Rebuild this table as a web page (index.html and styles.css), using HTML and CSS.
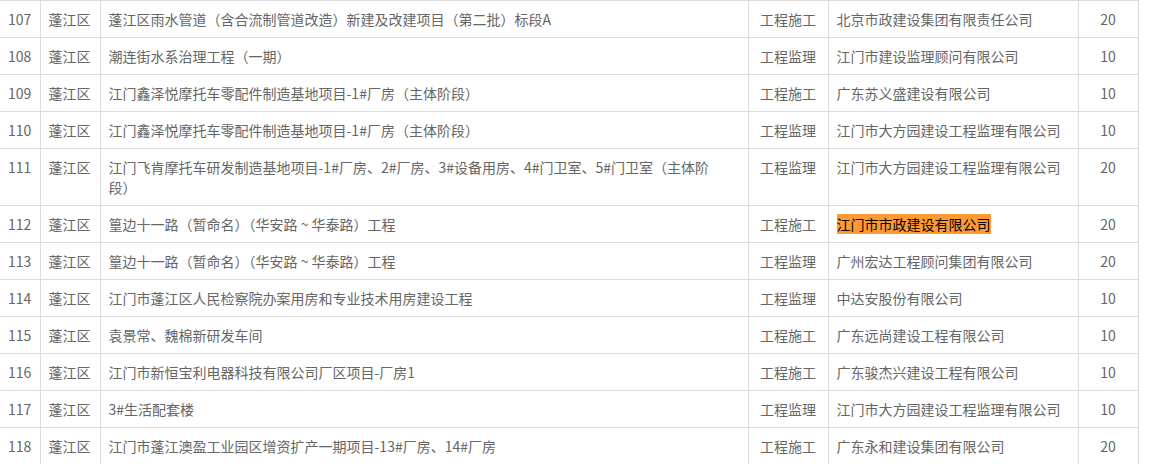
FILE: index.html
```html
<!DOCTYPE html>
<html lang="zh-CN">
<head>
<meta charset="utf-8">
<title>项目列表</title>
<link rel="stylesheet" href="styles.css">
</head>
<body>
<table class="list">
  <colgroup>
    <col class="c-no"><col class="c-area"><col class="c-name"><col class="c-type"><col class="c-corp"><col class="c-score">
  </colgroup>
  <tbody>
    <tr><td class="no">107</td><td>蓬江区</td><td>蓬江区雨水管道（含合流制管道改造）新建及改建项目（第二批）标段A</td><td class="mid">工程施工</td><td>北京市政建设集团有限责任公司</td><td class="mid">20</td></tr>
    <tr><td class="no">108</td><td>蓬江区</td><td>潮连街水系治理工程（一期）</td><td class="mid">工程监理</td><td>江门市建设监理顾问有限公司</td><td class="mid">10</td></tr>
    <tr><td class="no">109</td><td>蓬江区</td><td>江门鑫泽悦摩托车零配件制造基地项目-1#厂房（主体阶段）</td><td class="mid">工程施工</td><td>广东苏义盛建设有限公司</td><td class="mid">10</td></tr>
    <tr><td class="no">110</td><td>蓬江区</td><td>江门鑫泽悦摩托车零配件制造基地项目-1#厂房（主体阶段）</td><td class="mid">工程监理</td><td>江门市大方园建设工程监理有限公司</td><td class="mid">10</td></tr>
    <tr><td class="no">111</td><td>蓬江区</td><td>江门飞肯摩托车研发制造基地项目-1#厂房、2#厂房、3#设备用房、4#门卫室、5#门卫室（主体阶<br>段）</td><td class="mid">工程监理</td><td>江门市大方园建设工程监理有限公司</td><td class="mid">20</td></tr>
    <tr><td class="no">112</td><td>蓬江区</td><td>篁边十一路（暂命名）（华安路 ~ 华泰路）工程</td><td class="mid">工程施工</td><td><span class="mark">江门市市政建设有限公司</span></td><td class="mid">20</td></tr>
    <tr><td class="no">113</td><td>蓬江区</td><td>篁边十一路（暂命名）（华安路 ~ 华泰路）工程</td><td class="mid">工程监理</td><td>广州宏达工程顾问集团有限公司</td><td class="mid">20</td></tr>
    <tr><td class="no">114</td><td>蓬江区</td><td>江门市蓬江区人民检察院办案用房和专业技术用房建设工程</td><td class="mid">工程监理</td><td>中达安股份有限公司</td><td class="mid">10</td></tr>
    <tr><td class="no">115</td><td>蓬江区</td><td>袁景常、魏棉新研发车间</td><td class="mid">工程施工</td><td>广东远尚建设工程有限公司</td><td class="mid">10</td></tr>
    <tr><td class="no">116</td><td>蓬江区</td><td>江门市新恒宝利电器科技有限公司厂区项目-厂房1</td><td class="mid">工程施工</td><td>广东骏杰兴建设工程有限公司</td><td class="mid">10</td></tr>
    <tr><td class="no">117</td><td>蓬江区</td><td>3#生活配套楼</td><td class="mid">工程监理</td><td>江门市大方园建设工程监理有限公司</td><td class="mid">10</td></tr>
    <tr><td class="no">118</td><td>蓬江区</td><td>江门市蓬江澳盈工业园区增资扩产一期项目-13#厂房、14#厂房</td><td class="mid">工程施工</td><td>广东永和建设集团有限公司</td><td class="mid">20</td></tr>
  </tbody>
</table>
</body>
</html>
```

FILE: styles.css
```css
html, body {
  margin: 0;
  padding: 0;
  background: #fff;
}

body {
  font-family: "Microsoft YaHei", "Noto Sans CJK SC", "Noto Sans", sans-serif;
  font-size: 14px;
  color: #666;
}

.list {
  border-collapse: collapse;
  table-layout: fixed;
  width: 1138px;
}

.c-no { width: 40px; }
.c-area { width: 60px; }
.c-name { width: 648px; }
.c-type { width: 80px; }
.c-corp { width: 250px; }
.c-score { width: 60px; }

.list td {
  border: 1px solid #ddd;
  padding: 8px 8px;
  line-height: 20px;
  vertical-align: top;
  text-align: left;
  word-break: break-all;
}

.list td:first-child {
  border-left: none;
}

.list td.no {
  padding-left: 8px;
  padding-right: 0;
}

.list td.mid {
  text-align: center;
  padding-left: 0;
  padding-right: 0;
}

.mark {
  background: #ff9933;
  color: #000;
}
```
